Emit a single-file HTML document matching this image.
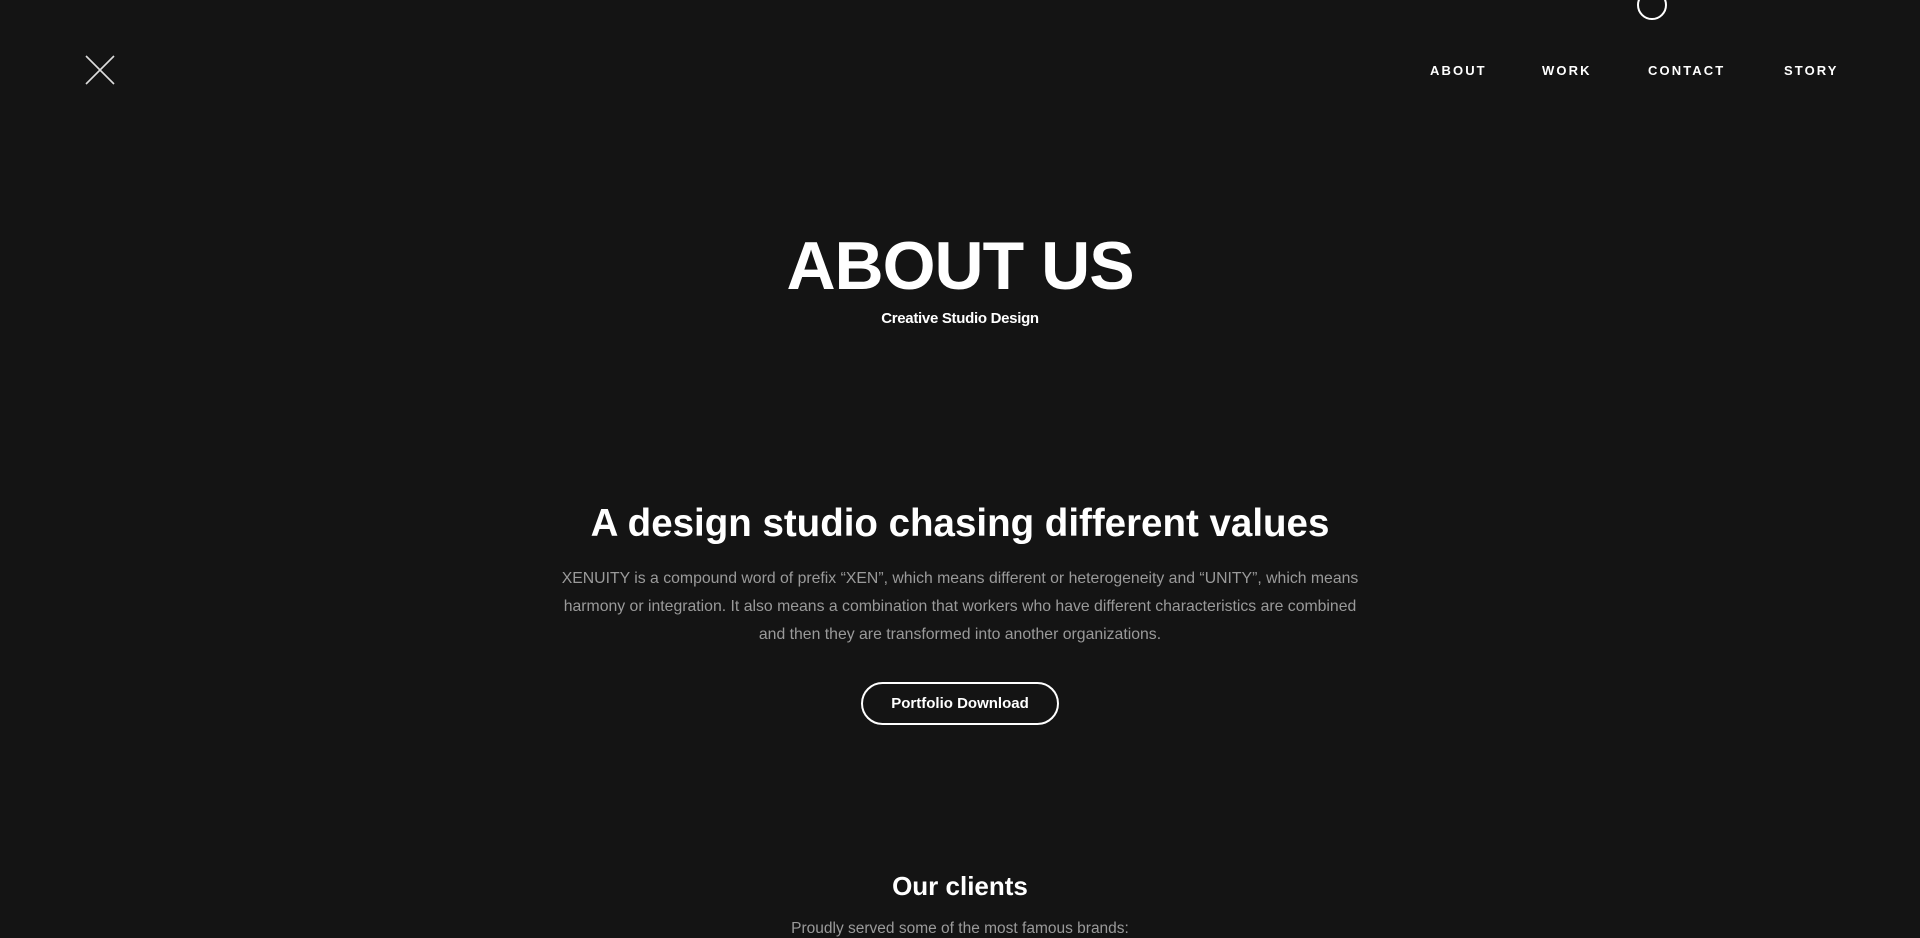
<!DOCTYPE html>
<html><head><meta charset="utf-8"><style>
*{margin:0;padding:0;box-sizing:border-box}
html,body{width:1920px;height:937px;overflow:hidden;background:#141414;color:#fff;font-family:"Liberation Sans",sans-serif}
.nav a{position:absolute;top:63px;font-size:13px;font-weight:bold;letter-spacing:2.1px;color:#fff;text-decoration:none}
.c{position:absolute;left:0;width:1920px;text-align:center}
</style></head><body>
<svg style="position:absolute;left:84px;top:54px" width="32" height="32" viewBox="0 0 32 32"><path d="M2 2L30 30M30 2L2 30" stroke="#ddd" stroke-width="1.6" fill="none"/></svg>
<div style="position:absolute;left:1637px;top:-10px;width:30px;height:30px;border:2px solid #fff;border-radius:50%"></div>
<div class="nav">
<a style="left:1430px">ABOUT</a><a style="left:1542px">WORK</a><a style="left:1648px">CONTACT</a><a style="left:1784px">STORY</a>
</div>
<div class="c" style="top:228px;font-size:68px;font-weight:bold;letter-spacing:-1px;line-height:76px">ABOUT US</div>
<div class="c" style="top:310px;font-size:15px;font-weight:bold;letter-spacing:-0.3px">Creative Studio Design</div>
<div class="c" style="top:501px;font-size:38.5px;font-weight:bold;line-height:46px">A design studio chasing different values</div>
<div class="c" style="top:565px;font-size:15.8px;line-height:28px;color:#9a9a9a">XENUITY is a compound word of prefix “XEN”, which means different or heterogeneity and “UNITY”, which means<br>harmony or integration. It also means a combination that workers who have different characteristics are combined<br>and then they are transformed into another organizations.</div>
<div style="position:absolute;left:861px;top:682px;width:198px;height:43px;border:2px solid #fff;border-radius:22px;text-align:center;line-height:39px;font-size:15px;font-weight:bold">Portfolio Download</div>
<div class="c" style="top:870px;font-size:26px;font-weight:bold;line-height:32px">Our clients</div>
<div class="c" style="top:920px;font-size:15.5px;color:#9a9a9a">Proudly served some of the most famous brands:</div>
</body></html>
